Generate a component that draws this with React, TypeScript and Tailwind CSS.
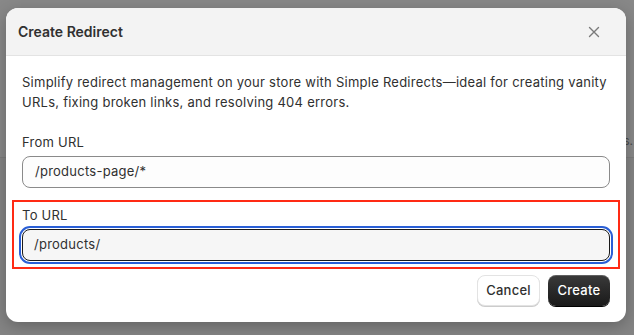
import React from 'react';

const font = { fontFamily: 'Inter, "Noto Sans", sans-serif' };

const CloseIcon = () => (
  <svg width="12" height="12" viewBox="0 0 12 12" fill="none">
    <path d="M1.5 1.5 L10.5 10.5 M10.5 1.5 L1.5 10.5" stroke="#7a7a7a" strokeWidth="1.4" strokeLinecap="round" />
  </svg>
);

export default function App() {
  return (
    <div className="relative h-[335px] w-full overflow-hidden bg-[#888888]" style={font}>
      {/* page behind the overlay */}
      <div className="absolute inset-0 flex flex-col">
        <div className="h-[157px]" />
        <div className="h-px bg-[#7c7c7c]" />
        <div className="flex-1 bg-[#848484]" />
      </div>
      <div className="absolute right-[1px] top-[132px] text-[12px] text-[#4a4a4a]">s.</div>

      {/* Modal */}
      <div className="relative ml-[6px] mt-[8px] w-[620px] overflow-hidden rounded-[12px] bg-white shadow-[0_4px_16px_rgba(0,0,0,0.25)]">
        <div className="flex h-[48px] items-center justify-between border-b border-[#e3e3e3] bg-[#f3f3f3] pl-[12px] pr-[26px]">
          <h2 className="text-[14px] font-semibold text-[#303030]">Create Redirect</h2>
          <CloseIcon />
        </div>

        <div className="px-[16px] pt-[16px] tracking-[0.25px]">
          <p className="text-[13px] leading-[20px] text-[#303030]">
            Simplify redirect management on your store with Simple Redirects—ideal for creating vanity URLs, fixing broken links, and resolving 404 errors.
          </p>

          <div className="mt-[20px]">
            <label className="block text-[13px] leading-[20px] text-[#303030]">From URL</label>
            <div className="mt-[4px] flex h-[32px] items-center rounded-[8px] border border-[#8a8a8a] bg-[#fdfdfd] px-[12px] text-[13px] text-[#303030]">
              /products-page/*
            </div>
          </div>

          <div className="-mx-[10px] mt-[12px] border-2 border-[#ff2a14] px-[8px] pb-[6px] pt-[3px]">
            <label className="block text-[13px] leading-[20px] text-[#303030]">To URL</label>
            <div className="mt-[4px] flex h-[32px] items-center rounded-[8px] border-[1.5px] border-[#1a1a1a] bg-[#f6f6f6] px-[11px] text-[13px] text-[#303030] outline outline-2 outline-offset-1 outline-[#2a5fd6]">
              /products/
            </div>
          </div>

          <div className="flex justify-end gap-[8px] pb-[16px] pt-[6px]">
            <button className="h-[31px] w-[63px] rounded-[8px] border border-[#e3e3e3] bg-white text-[13px] font-medium text-[#303030] shadow-[0_1px_0_#cccccc]">
              Cancel
            </button>
            <button className="h-[31px] w-[62px] rounded-[8px] bg-gradient-to-b from-[#3a3a3a] to-[#1a1a1a] text-[13px] font-medium text-white shadow-[inset_0_1px_0_rgba(255,255,255,0.2),0_1px_0_#000]">
              Create
            </button>
          </div>
        </div>
      </div>
    </div>
  );
}
